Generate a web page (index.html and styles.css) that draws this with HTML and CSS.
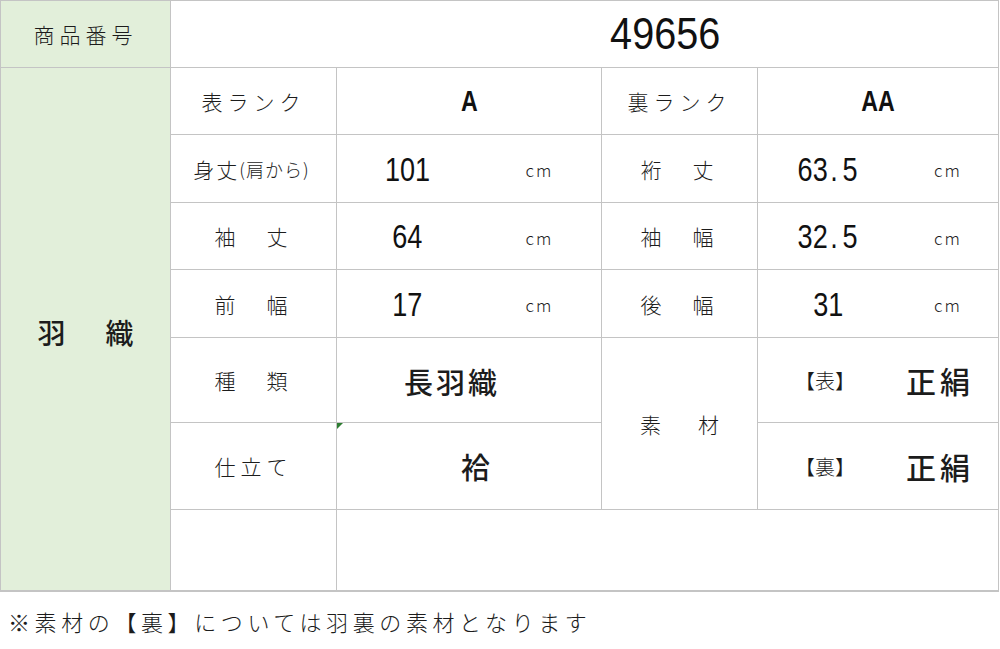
FILE: index.html
```html
<!DOCTYPE html>
<html lang="ja">
<head>
<meta charset="utf-8">
<title>商品番号 49656</title>
<link rel="stylesheet" href="styles.css">
</head>
<body>
<div class="sheet">
  <div class="cell green lbl">商品番号</div>
  <div class="cell code"><span class="num big">49656</span></div>

  <div class="cell green main"><span>羽</span><span>織</span></div>

  <div class="cell lbl">表ランク</div>
  <div class="cell rank"><span class="num rk">A</span></div>
  <div class="cell lbl">裏ランク</div>
  <div class="cell rank"><span class="num rk">AA</span></div>

  <div class="cell lbl mitake">身丈<small class="paren">(肩から)</small></div>
  <div class="cell val wide"><span class="n"><span class="num">101</span></span><span class="u">cm</span></div>
  <div class="cell lbl sp">裄　丈</div>
  <div class="cell val"><span class="n"><span class="num">63<span class="dot">.</span>5</span></span><span class="u">cm</span></div>

  <div class="cell lbl sp">袖　丈</div>
  <div class="cell val wide"><span class="n"><span class="num">64</span></span><span class="u">cm</span></div>
  <div class="cell lbl sp">袖　幅</div>
  <div class="cell val"><span class="n"><span class="num">32<span class="dot">.</span>5</span></span><span class="u">cm</span></div>

  <div class="cell lbl sp">前　幅</div>
  <div class="cell val wide"><span class="n"><span class="num">17</span></span><span class="u">cm</span></div>
  <div class="cell lbl sp">後　幅</div>
  <div class="cell val"><span class="n"><span class="num">31</span></span><span class="u">cm</span></div>

  <div class="cell lbl sp">種　類</div>
  <div class="cell strong kind">長羽織</div>
  <div class="cell lbl sozai">素　材</div>
  <div class="cell mat"><span class="br">【表】</span><span class="strong">正絹</span></div>

  <div class="cell lbl">仕立て</div>
  <div class="cell strong awase">袷<i class="tri"></i></div>
  <div class="cell mat"><span class="br">【裏】</span><span class="strong">正絹</span></div>

  <div class="cell"></div>
  <div class="cell rest"></div>
</div>
<p class="note">※素材の【裏】については羽裏の素材となります</p>
</body>
</html>
```

FILE: styles.css
```css
html, body {
  margin: 0;
  padding: 0;
  background: #ffffff;
}

body {
  font-family: "Noto Sans CJK JP", "Noto Sans", sans-serif;
  color: #1c1c1c;
}

.sheet {
  display: grid;
  grid-template-columns: 169px 165px 264px 155px 240px;
  grid-template-rows: 66px 66px 67px 66px 67px 84px 86px 80px;
  gap: 1px;
  width: max-content;
  background: #c4c4c4;
  border: 1px solid #c4c4c4;
  border-bottom-width: 2px;
}

.cell {
  background: #ffffff;
  display: flex;
  align-items: center;
  justify-content: center;
  position: relative;
}

.green {
  background: #e2efda;
}

.lbl {
  font-size: 21px;
  font-weight: 300;
  letter-spacing: 5px;
}

.lbl.sp {
  letter-spacing: 5px;
}

.lbl.mitake {
  letter-spacing: 2px;
  padding-right: 4px;
}

.paren {
  font-size: 18px;
  letter-spacing: 1px;
}

.code {
  grid-column: 2 / 6;
  padding-left: 162px;
}

.main {
  grid-column: 1;
  grid-row: 2 / 9;
  gap: 40px;
  font-size: 28px;
  font-weight: 500;
  padding-top: 6px;
}

.sozai {
  grid-column: 4;
  grid-row: 6 / 8;
  letter-spacing: 8px;
  padding-left: 8px;
}

.rest {
  grid-column: 3 / 6;
}

.num {
  display: inline-block;
  font-family: "Liberation Sans", "Noto Sans", sans-serif;
  font-size: 33px;
  color: #111;
  transform: scaleX(0.82);
  white-space: nowrap;
}

.num.big {
  font-size: 44px;
  transform: scaleX(0.9);
}

.num.rk {
  font-size: 29px;
  font-weight: 700;
  transform: scaleX(0.8);
}

.dot {
  padding: 0 6px 0 3px;
}

.val {
  justify-content: flex-start;
}

.val .n {
  width: 140px;
  text-align: center;
  padding-top: 2px;
}

.val.wide .n {
  width: 141px;
}

.val .u {
  flex: 1;
  text-align: center;
  font-size: 17px;
  font-weight: 300;
  letter-spacing: 2px;
  padding-top: 2px;
}

.strong {
  font-size: 29px;
  font-weight: 500;
  letter-spacing: 3px;
}

.kind {
  padding-right: 34px;
  padding-top: 2px;
}

.awase {
  padding-left: 16px;
}

.tri {
  position: absolute;
  left: 0;
  top: 0;
  width: 0;
  height: 0;
  border-top: 6px solid #2e7d32;
  border-right: 6px solid transparent;
}

.mat {
  justify-content: flex-start;
  padding-left: 37px;
}

.mat .br {
  font-size: 20px;
  font-weight: 300;
  width: 72px;
}

.mat .strong {
  margin-left: 39px;
  letter-spacing: 4px;
  font-size: 30px;
}

.note {
  margin: 13px 0 0 8px;
  font-size: 22px;
  font-weight: 300;
  letter-spacing: 4.6px;
}
```
